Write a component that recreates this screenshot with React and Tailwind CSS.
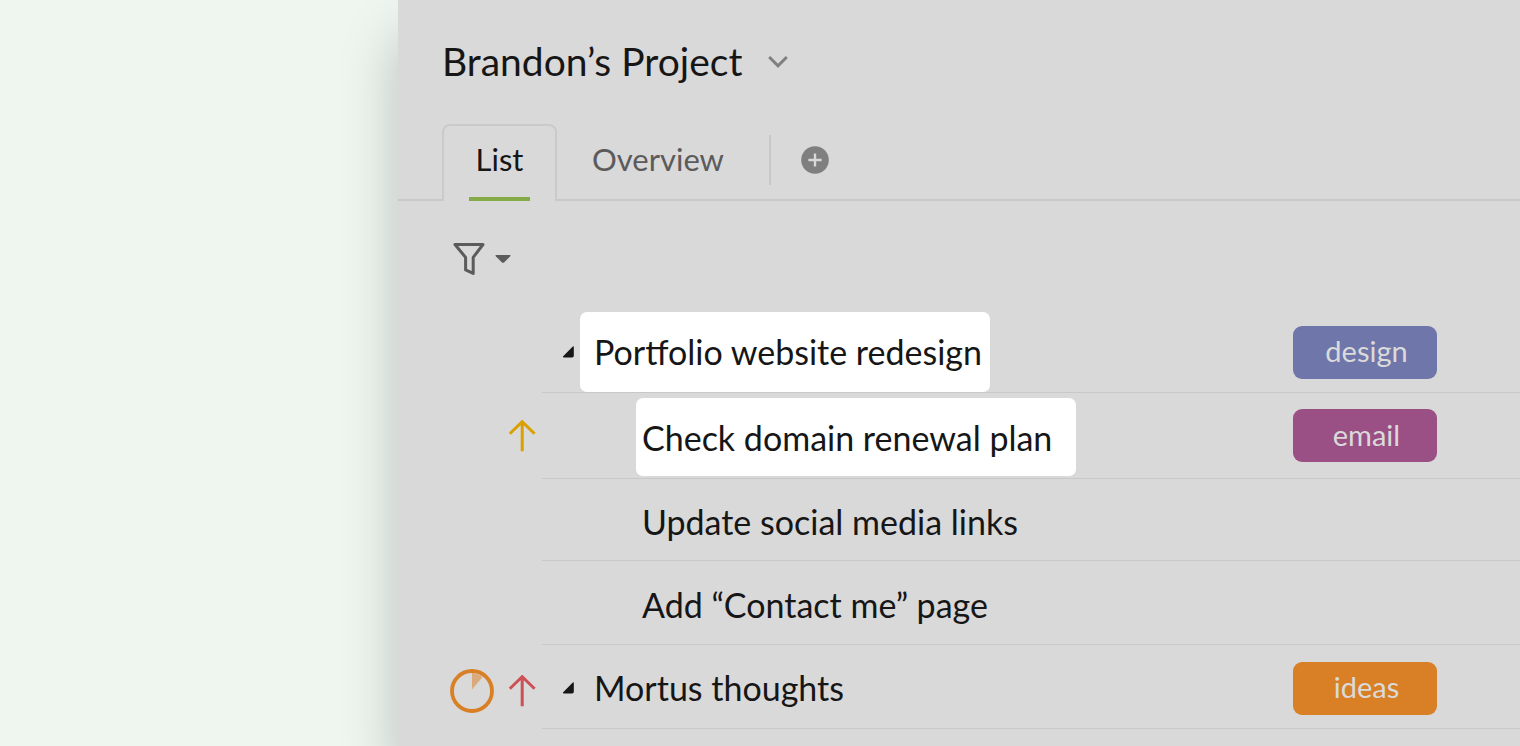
const tasks = [
  { title: 'Portfolio website redesign', parent: true, highlight: true, tag: 'design', tagColor: 'bg-[#6f76aa]', height: 'h-[81px]' },
  { title: 'Check domain renewal plan', highlight: true, tag: 'email', tagColor: 'bg-[#9a5085]', arrow: '#d9a000', height: 'h-[86px]' },
  { title: 'Update social media links', height: 'h-[82px]' },
  { title: 'Add “Contact me” page', height: 'h-[84px]' },
  { title: 'Mortus thoughts', parent: true, tag: 'ideas', tagColor: 'bg-[#d98026]', arrow: '#cc5055', progress: true, height: 'h-[84px]' },
];

function ChevronIcon() {
  return (
    <svg width="20" height="14" viewBox="0 0 20 14" fill="none" aria-hidden="true">
      <path d="M1.2 2L10 10.8L18.8 2" stroke="#808080" strokeWidth="3" />
    </svg>
  );
}

function PlusIcon() {
  return (
    <svg width="28" height="28" viewBox="0 0 28 28" aria-hidden="true">
      <circle cx="14" cy="14" r="13.8" fill="#7f7f7f" />
      <path d="M14 7.4V20.6M7.4 14H20.6" stroke="#d9d9d9" strokeWidth="2.4" />
    </svg>
  );
}

function FunnelIcon() {
  return (
    <svg width="32" height="34" viewBox="0 0 32 34" fill="none" aria-hidden="true">
      <path d="M2 2.5H30L20.2 15.4V31.4L12.6 27.9V15.4Z" stroke="#5b5b5b" strokeWidth="3" strokeLinejoin="round" />
    </svg>
  );
}

function CaretIcon() {
  return (
    <svg width="16" height="8" viewBox="0 0 16 8" aria-hidden="true">
      <path d="M1 0H15Q16 .3 15.2 1.2L9.3 7.2Q8 8.4 6.7 7.2L.8 1.2Q0 .3 1 0Z" fill="#5b5b5b" />
    </svg>
  );
}

function ArrowIcon({ color }) {
  return (
    <svg width="28" height="32" viewBox="0 0 28 32" fill="none" aria-hidden="true">
      <path d="M14.2 31.2V2M1.8 13.8L14.2 1.7L26.6 13.8" stroke={color} strokeWidth="3" />
    </svg>
  );
}

function ProgressIcon() {
  return (
    <svg width="44" height="44" viewBox="0 0 44 44" fill="none" aria-hidden="true">
      <path d="M22 20.5V4A18 18 0 0 1 32.5 8Z" fill="#dbaa7b" />
      <circle cx="22" cy="22" r="20" stroke="#d98026" strokeWidth="3.8" />
    </svg>
  );
}

function TriangleIcon() {
  return (
    <svg width="13" height="12" viewBox="0 0 13 12" aria-hidden="true">
      <path d="M10.8 .6Q11.8 -.2 11.8 1.2V9.8Q11.8 11.4 10.2 11.4H1.6Q.4 11.2 1.2 10.2Z" fill="#161616" />
    </svg>
  );
}

function TaskRow({ task }) {
  const indent = task.highlight
    ? task.parent ? 'w-[410px] pl-[14px]' : 'ml-14 w-[440px] pl-[6px]'
    : task.parent ? 'pl-[14px]' : 'pl-[62px]';
  return (
    <li className={`flex ${task.height}`}>
      <div className={`flex w-36 shrink-0 items-center justify-end gap-[14px] pr-[6px] ${task.progress ? 'pt-[7px]' : ''}`}>
        {task.progress && <ProgressIcon />}
        {task.arrow && <ArrowIcon color={task.arrow} />}
      </div>
      <div className={`flex min-w-0 flex-1 items-center border-b border-[#c8c8c8] pr-[83px] ${task.progress ? 'pt-[3px]' : ''}`}>
        <div className="flex w-[38px] shrink-0 justify-end pr-[5px]">
          {task.parent && (
            <button type="button" aria-label={`Collapse ${task.title}`}>
              <TriangleIcon />
            </button>
          )}
        </div>
        <div className="flex flex-1 self-stretch">
          <div className={task.highlight ? (task.parent ? '' : 'pt-[5px] pb-[2px]') : 'flex'}>
            <div className={`flex h-full items-center whitespace-nowrap ${indent} ${task.highlight ? 'rounded-[7px] bg-white' : ''} ${task.parent ? 'pb-[2px]' : task.highlight ? '' : 'pt-1'}`}>
              <span>{task.title}</span>
            </div>
          </div>
        </div>
        {task.tag && (
          <span className={`flex h-[53px] w-36 shrink-0 items-center justify-center rounded-[9px] pb-[2px] pl-[3px] text-[29px] text-[#dadada] ${task.tagColor}`}>
            {task.tag}
          </span>
        )}
      </div>
    </li>
  );
}

export default function App() {
  return (
    <div className="flex min-h-screen overflow-hidden bg-[#eef6ef] font-[Lato,sans-serif] text-[#161616]">
      <div className="w-[398px] shrink-0" />
      <main className="min-w-0 flex-1 bg-[#d9d9d9] shadow-[0_36px_54px_rgba(0,0,0,0.22)]">
        <header className="flex h-[124px] items-center gap-[26px] pl-11">
          <h1 className="pb-[2px] text-[39px] leading-none">Brandon’s Project</h1>
          <button type="button" aria-label="Project menu">
            <ChevronIcon />
          </button>
        </header>
        <nav className="flex h-[77px] text-[31px]" aria-label="Project views">
          <div className="w-11 border-b-2 border-[#c8c8c8]" />
          <a href="#list" aria-current="page" className="flex w-[115px] flex-col items-center rounded-t-lg border-x-2 border-t-2 border-[#cacaca]">
            <span className="flex flex-1 items-center pb-[4px]">List</span>
            <span className="h-1 w-[61px] bg-[#84ab47]" />
          </a>
          <div className="flex flex-1 items-center border-b-2 border-[#c8c8c8] pb-[4px] pl-[35px]">
            <a href="#overview" className="text-[#5b5b5b]">Overview</a>
            <span className="ml-[45px] h-[50px] w-[2px] bg-[#c8c8c8]" />
            <button type="button" aria-label="Add view" className="ml-[30px]">
              <PlusIcon />
            </button>
          </div>
        </nav>
        <div className="flex h-[111px] items-start pt-[41px] pl-[55px]">
          <button type="button" aria-label="Filter" className="flex items-center gap-[10px]">
            <FunnelIcon />
            <CaretIcon />
          </button>
        </div>
        <ul className="text-[34px]">
          {tasks.map((task) => (
            <TaskRow key={task.title} task={task} />
          ))}
        </ul>
      </main>
    </div>
  );
}
